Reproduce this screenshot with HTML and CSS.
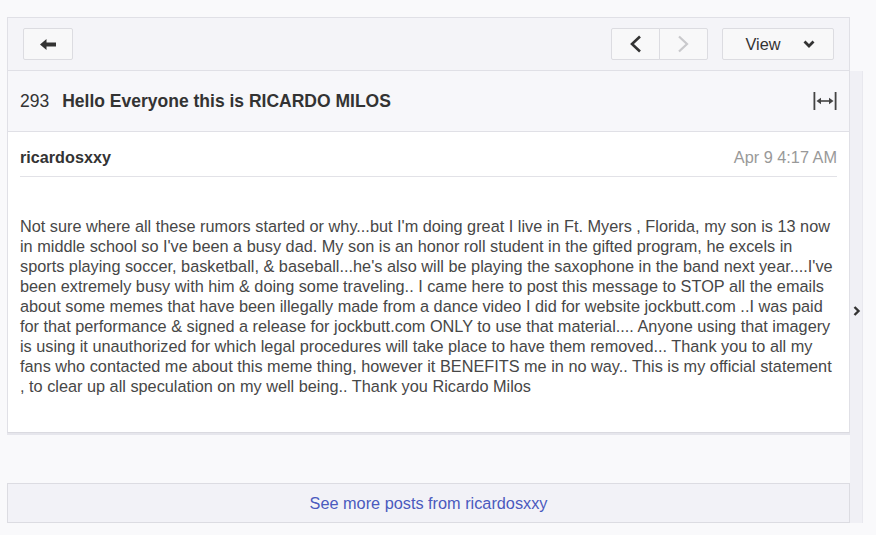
FILE: index.html
```html
<!DOCTYPE html>
<html lang="en">
<head>
<meta charset="utf-8">
<title>Hello Everyone this is RICARDO MILOS</title>
<link rel="stylesheet" href="styles.css">
</head>
<body>
<div class="page">
  <div class="thread">
    <div class="toolbar">
      <button class="btn btn-back" aria-label="Back">
        <svg width="16" height="11" viewBox="0 0 16 11"><path d="M0 5.5 L6.5 0 V3.5 H16 V7.5 H6.5 V11 Z" fill="#333"/></svg>
      </button>
      <div class="spacer"></div>
      <div class="pager">
        <button class="btn btn-nav" aria-label="Previous">
          <svg width="13" height="18" viewBox="0 0 13 18"><path d="M11 1.5 L3 9 L11 16.5" fill="none" stroke="#333" stroke-width="2.6"/></svg>
        </button>
        <button class="btn btn-nav is-disabled" aria-label="Next">
          <svg width="13" height="18" viewBox="0 0 13 18"><path d="M2 1.5 L10 9 L2 16.5" fill="none" stroke="#c9c9cc" stroke-width="2.2"/></svg>
        </button>
      </div>
      <button class="btn btn-view">View
        <svg width="12" height="8" viewBox="0 0 12 8"><path d="M1.5 1.5 L6 6 L10.5 1.5" fill="none" stroke="#333" stroke-width="2.8"/></svg>
      </button>
    </div>

    <div class="title-row">
      <span class="count">293</span>
      <h1 class="subject">Hello Everyone this is RICARDO MILOS</h1>
      <svg class="expand" width="24" height="18" viewBox="0 0 24 18">
        <rect x="0.5" y="0" width="1.8" height="18" fill="#444"/>
        <rect x="21.7" y="0" width="1.8" height="18" fill="#444"/>
        <path d="M3.5 9 L8 5.8 V12.2 Z" fill="#444"/>
        <path d="M20.5 9 L16 5.8 V12.2 Z" fill="#444"/>
        <rect x="7" y="8.2" width="10" height="1.6" fill="#444"/>
      </svg>
    </div>

    <article class="post">
      <header class="post-head">
        <span class="author">ricardosxxy</span>
        <time class="date">Apr 9 4:17 AM</time>
      </header>
      <p class="post-body">Not sure where all these rumors started or why...but I'm doing great I live in Ft. Myers , Florida, my son is 13 now in middle school so I've been a busy dad. My son is an honor roll student in the gifted program, he excels in sports playing soccer, basketball, &amp; baseball...he's also will be playing the saxophone in the band next year....I've been extremely busy with him &amp; doing some traveling.. I came here to post this message to STOP all the emails about some memes that have been illegally made from a dance video I did for website jockbutt.com ..I was paid for that performance &amp; signed a release for jockbutt.com ONLY to use that material.... Anyone using that imagery is using it unauthorized for which legal procedures will take place to have them removed... Thank you to all my fans who contacted me about this meme thing, however it BENEFITS me in no way.. This is my official statement , to clear up all speculation on my well being.. Thank you Ricardo Milos</p>
    </article>

    <div class="more">
      <a href="#" class="more-link">See more posts from ricardosxxy</a>
    </div>
  </div>

  <aside class="next-strip">
    <svg width="8" height="10" viewBox="0 0 8 10"><path d="M1.5 1 L5.5 5 L1.5 9" fill="none" stroke="#333" stroke-width="2.4"/></svg>
  </aside>
</div>
</body>
</html>
```

FILE: styles.css
```css
* { box-sizing: border-box; }

html, body {
  margin: 0;
  padding: 0;
  background: #f9f9fb;
  font-family: "Liberation Sans", Arial, sans-serif;
  color: #333;
}

.page {
  display: flex;
  align-items: flex-start;
  padding: 17px 0 0 7px;
}

.thread {
  width: 843px;
  display: flex;
  flex-direction: column;
}

/* top toolbar */
.toolbar {
  display: flex;
  align-items: center;
  background: #f4f4f8;
  border: 1px solid #e0e0e6;
  border-bottom: none;
  padding: 10px 15px;
}

.spacer { flex: 1; }

.btn {
  display: inline-flex;
  align-items: center;
  justify-content: center;
  height: 32px;
  background: #f8f8f9;
  border: 1px solid #dcdce1;
  border-radius: 2px;
  padding: 0;
  font-family: inherit;
  color: #333;
  cursor: pointer;
}

.btn-back { width: 50px; }

.pager { display: flex; }

.btn-nav { width: 49px; }
.pager .btn-nav + .btn-nav { margin-left: -1px; }
.pager .btn-nav:first-child { border-top-right-radius: 0; border-bottom-right-radius: 0; }
.pager .btn-nav:last-child { border-top-left-radius: 0; border-bottom-left-radius: 0; }

.btn-view {
  width: 112px;
  margin-left: 14px;
  font-size: 16.3px;
  gap: 22px;
  padding-left: 4px;
}

/* subject line */
.title-row {
  display: flex;
  align-items: center;
  height: 62px;
  background: #f7f7fa;
  border: 1px solid #e0e0e6;
  padding: 0 12px;
}

.count {
  font-size: 17.5px;
  color: #333;
  margin-right: 13px;
}

.subject {
  margin: 0;
  flex: 1;
  font-size: 17.5px;
  font-weight: bold;
  color: #333;
}

/* post */
.post {
  background: #fff;
  border: 1px solid #e0e0e6;
  border-top: none;
  border-bottom-color: #dadae0;
  box-shadow: 0 2px 0 #e6e6ec;
  padding: 0 12px;
}

.post-head {
  display: flex;
  justify-content: space-between;
  align-items: center;
  padding: 15px 0 9px;
  line-height: 20px;
  border-bottom: 1px solid #e2e2e7;
}

.author {
  font-size: 16.2px;
  font-weight: bold;
  color: #333;
}

.date {
  font-size: 16.3px;
  color: #999;
}

.post-body {
  margin: 39px 0 0;
  padding-bottom: 36px;
  font-size: 16.3px;
  line-height: 20px;
  color: #474747;
}

/* footer link */
.more {
  margin-top: 50px;
  height: 40px;
  display: flex;
  align-items: center;
  justify-content: center;
  background: #f2f2f7;
  border: 1px solid #dcdce2;
}

.more-link {
  font-size: 16.3px;
  color: #4a5abe;
  text-decoration: none;
}

/* strip leading to the next thread */
.next-strip {
  align-self: stretch;
  width: 13px;
  margin-top: 54px;
  background: #f0f0f5;
  border-right: 1px solid #e8e8ee;
  padding-top: 235px;
  display: flex;
  justify-content: flex-end;
  padding-right: 1px;
}

.next-strip svg { display: block; }
```
